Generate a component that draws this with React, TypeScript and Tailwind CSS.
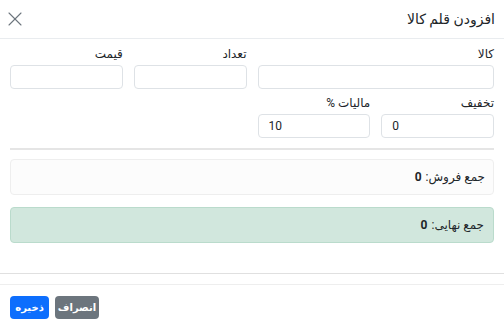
import { X } from 'lucide-react'

const font = "font-['Roboto','DejaVu_Sans',sans-serif]"

function Field({ label, value = '', span = false }: { label: string; value?: string; span?: boolean }) {
  return (
    <div className={span ? 'col-span-2' : ''}>
      <label className="block h-[17px] text-[12px] leading-[17px] text-[#212529]">{label}</label>
      <input
        readOnly
        value={value}
        className="mt-[2px] block h-[24px] w-full rounded-[4px] border border-[#dee2e6] bg-white px-[10px] text-left text-[12px] text-[#212529] outline-none"
      />
    </div>
  )
}

export default function App() {
  return (
    <div dir="rtl" className={`flex h-[330px] w-[504px] flex-col overflow-hidden bg-white ${font}`}>
      <div className="flex h-[39px] shrink-0 items-center justify-between border-b border-[#e9ecef] pl-[3px] pr-[9px]">
        <h5 className="text-[14px] text-[#212529]">افزودن قلم کالا</h5>
        <X className="h-[24px] w-[24px] text-[#6c757d]" strokeWidth={1.1} />
      </div>

      <div className="px-[10px] pt-[7px]">
        <div className="grid grid-cols-4 gap-x-[11px] gap-y-[6px]">
          <Field label="کالا" span />
          <Field label="تعداد" />
          <Field label="قیمت" />
          <Field label="تخفیف" value="0" />
          <Field label="مالیات %" value="10" />
        </div>

        <hr className="mt-[10px] border-t-[2px] border-[#e5e5e5]" />

        <div className="mt-[9px] flex h-[36px] items-center rounded-[4px] border border-[#eeeeee] bg-[#fcfcfc] px-[8px] text-[12px] text-[#212529]">
          جمع فروش: <b className="mr-[4px]">0</b>
        </div>

        <div className="mt-[12px] flex h-[36px] items-center rounded-[4px] border border-[#badbcc] bg-[#d1e7dd] px-[9px] text-[12px] text-[#212529]">
          جمع نهایی: <b className="mr-[4px]">0</b>
        </div>
      </div>

      <div className="mt-[30px] border-t border-[#e0e0e0]" />
      <div className="mt-[10px] flex flex-1 items-start justify-end gap-[6px] border-t border-[#eeeeee] px-[10px] pt-[11px]">
        <button className="flex h-[23px] w-[44px] items-center justify-center rounded-[4px] bg-[#6c757d] text-[10px] font-bold text-white">
          انصراف
        </button>
        <button className="flex h-[23px] w-[39px] items-center justify-center rounded-[4px] bg-[#0d6efd] text-[10px] font-bold text-white">
          ذخیره
        </button>
      </div>
    </div>
  )
}
